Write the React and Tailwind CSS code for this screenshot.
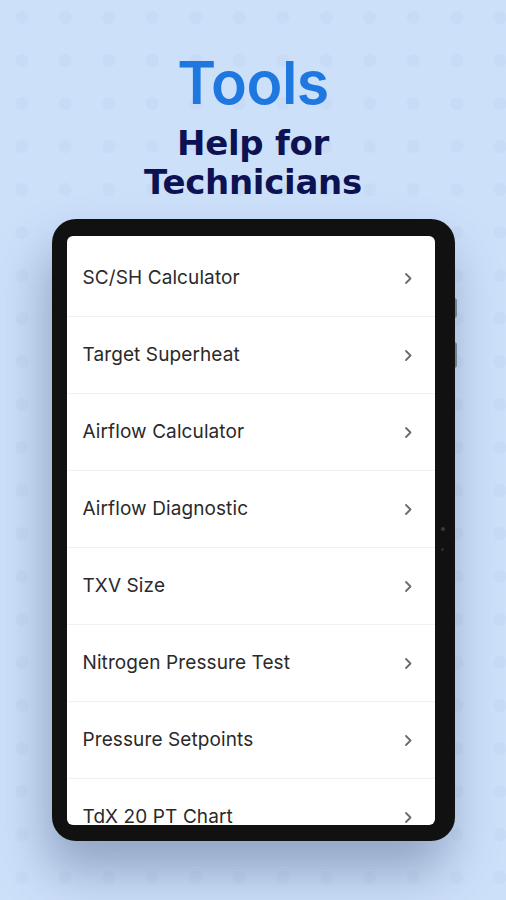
const tools = [
  'SC/SH Calculator',
  'Target Superheat',
  'Airflow Calculator',
  'Airflow Diagnostic',
  'TXV Size',
  'Nitrogen Pressure Test',
  'Pressure Setpoints',
  'TdX 20 PT Chart',
]

function Chevron() {
  return (
    <svg width="9" height="13" viewBox="0 0 9 13" fill="none" className="shrink-0">
      <path d="M2 2l4.5 4.5L2 11" stroke="#6b6b6b" strokeWidth="1.8" strokeLinecap="round" strokeLinejoin="round" />
    </svg>
  )
}

export default function App() {
  return (
    <div className="w-full h-[900px] overflow-hidden bg-[#cde0fa] bg-[radial-gradient(circle,rgba(140,168,212,0.09)_6px,transparent_7px)] bg-[length:43.5px_43px] bg-[position:0_-4px] font-['Inter',sans-serif]">
      <div className="pt-[54px] flex flex-col items-center">
        <h1 className="text-[59px] leading-[58px] font-semibold text-[#1f78e0] tracking-[-0.5px]">Tools</h1>
        <h2 className="mt-[12px] text-[34px] leading-[39px] font-bold text-[#0d1352] text-center font-['DejaVu_Sans',sans-serif] tracking-[-0.3px]">
          Help for
          <br />
          Technicians
        </h2>
      </div>

      <div className="relative mx-auto mt-[17px] w-[403px] h-[622px] rounded-[24px] bg-[#111111] pl-[15px] pr-[20px] pt-[17px] pb-[16px] shadow-[-6px_30px_50px_rgba(55,75,115,0.4)]">
        <div className="h-full rounded-[6px] bg-white overflow-hidden pt-[4px]">
          {tools.map(t => (
            <div key={t} className="h-[77px] flex items-center justify-between pl-[16px] pr-[22px] border-b border-[#f1f1f1]">
              <span className="text-[19px] tracking-[0.1px] text-[#2a2a2a]">{t}</span>
              <Chevron />
            </div>
          ))}
        </div>
        <div className="absolute right-[-2px] top-[79px] w-[3px] h-[20px] rounded-r bg-[#1a1a1a]/40" />
        <div className="absolute right-[-2px] top-[123px] w-[3px] h-[26px] rounded-r bg-[#1a1a1a]/40" />
        <div className="absolute right-[10px] top-[308px] w-[4px] h-[4px] rounded-full bg-[#3a3a3a]" />
        <div className="absolute right-[11px] top-[329px] w-[3px] h-[3px] rounded-full bg-[#2e2e2e]" />
      </div>
    </div>
  )
}
